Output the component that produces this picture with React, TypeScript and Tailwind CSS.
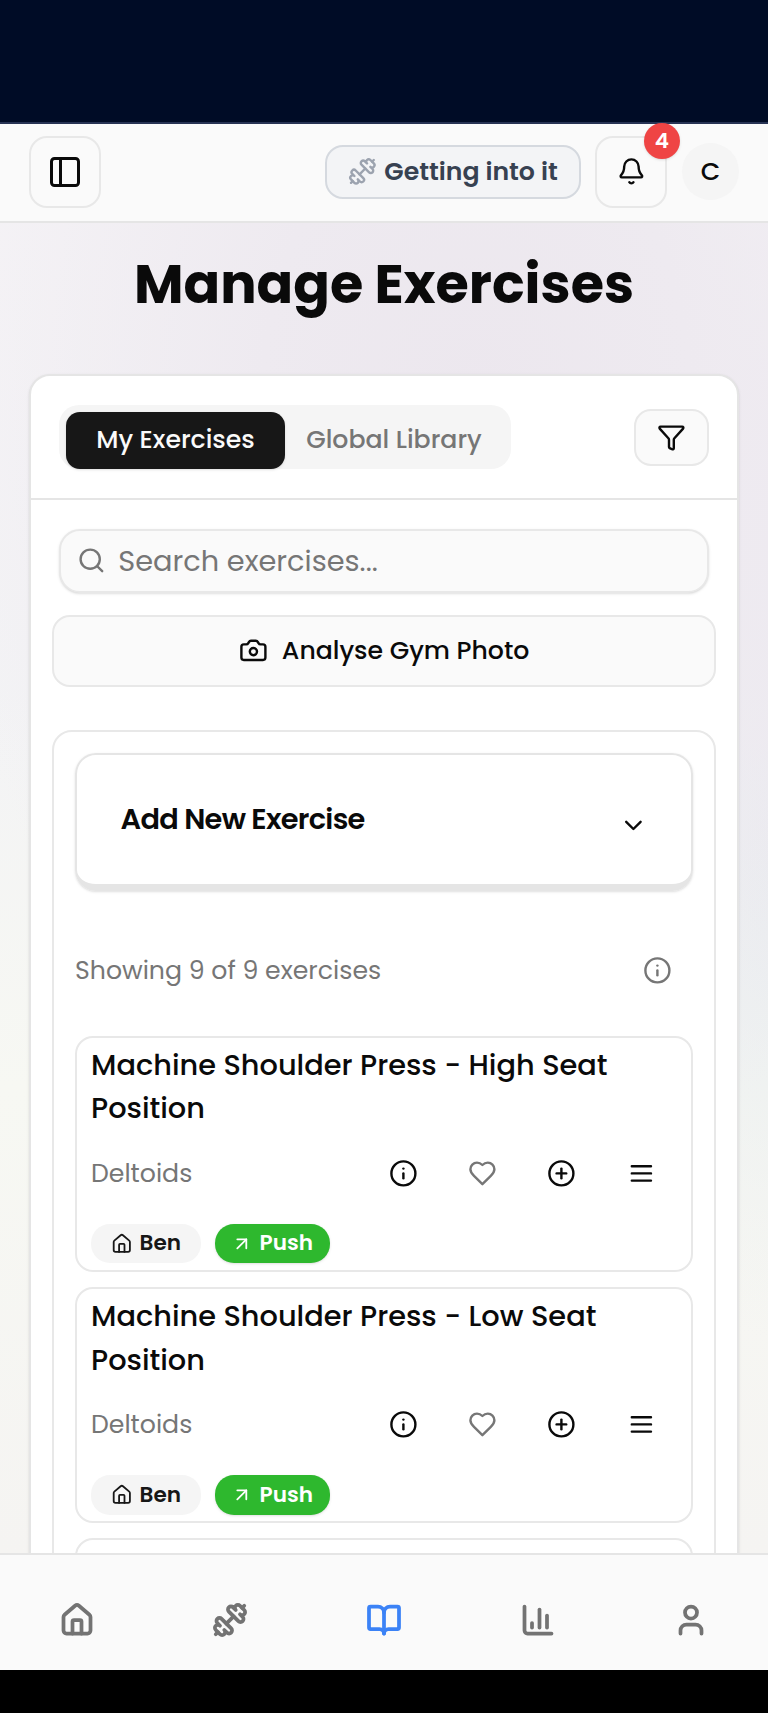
import { ReactNode } from "react";
import {
  ArrowUpRight,
  Bell,
  BookOpen,
  Camera,
  ChartColumn,
  ChevronDown,
  CirclePlus,
  Dumbbell,
  Funnel,
  House,
  Info,
  PanelLeft,
  Search,
  User,
} from "lucide-react";

function Heart() {
  return (
    <svg viewBox="0 0 24 24" fill="none" stroke="currentColor" strokeWidth="2" strokeLinecap="round" strokeLinejoin="round" className="size-[28.8px] text-[#767676]">
      <path d="M19 14c1.49-1.46 3-3.21 3-5.5A5.5 5.5 0 0 0 16.5 3c-1.76 0-3 .5-4.5 2-1.5-1.5-2.74-2-4.5-2A5.5 5.5 0 0 0 2 8.5c0 2.3 1.5 4.05 3 5.5l7 7Z" />
    </svg>
  );
}

function Menu() {
  return (
    <svg viewBox="0 0 24 24" fill="none" stroke="currentColor" strokeWidth="2" strokeLinecap="round" className="size-[28.8px]">
      <path d="M4 6h16M4 12h16M4 18h16" />
    </svg>
  );
}

function ActionButton({ children }: { children: ReactNode }) {
  return <button className="flex h-[58px] w-[79.2px] items-center justify-center">{children}</button>;
}

function ExerciseCard({ seat }: { seat: string }) {
  return (
    <article className="h-[236px] shrink-0 rounded-[18px] border-2 border-[#e8e8e8] bg-white pl-[14px] pt-[6.5px]">
      <h3 className="text-[28.8px] font-medium leading-[43.2px]">
        Machine Shoulder Press - {seat} Seat
        <br />
        Position
      </h3>
      <div className="mt-[14px] flex h-[58px] items-center justify-between pr-[10px]">
        <span className="text-[25.2px] text-[#767676]">Deltoids</span>
        <div className="flex">
          <ActionButton><Info className="size-[28.8px]" /></ActionButton>
          <ActionButton><Heart /></ActionButton>
          <ActionButton><CirclePlus className="size-[28.8px]" /></ActionButton>
          <ActionButton><Menu /></ActionButton>
        </div>
      </div>
      <div className="mt-[21.5px] flex gap-[14px] text-[21.6px] font-semibold">
        <span className="flex h-[39.5px] w-[110px] items-center rounded-[19px] bg-[#f5f5f5] pl-[20px] text-[#171717]">
          <House className="mr-[7px] size-[21.6px]" />
          Ben
        </span>
        <span className="flex h-[39.5px] w-[115px] items-center rounded-[19px] bg-[#2eb82e] pl-[16px] text-white shadow-sm">
          <ArrowUpRight className="mr-[7px] size-[21.6px]" />
          Push
        </span>
      </div>
    </article>
  );
}

export default function App() {
  return (
    <div className="flex h-[1713px] w-[768px] flex-col overflow-hidden bg-black font-['Poppins','Inter',sans-serif] text-[#0a0a0a]">
      <div className="h-[124px] shrink-0 border-b-2 border-[#273354] bg-[#000c26]" />
      <header className="flex h-[99px] shrink-0 items-center border-b-2 border-[#e5e5e5] bg-[#fafafa] px-[29px] pb-[2px]">
        <button className="flex size-[72px] items-center justify-center rounded-[18px] border-2 border-[#e8e8e8]">
          <PanelLeft className="size-[36px]" />
        </button>
        <div className="ml-auto flex h-[54px] w-[256px] items-center rounded-[18px] border-2 border-[#d5d9df] bg-[#f3f4f6] pl-[21px] text-[25.2px] font-semibold text-[#374151]">
          <Dumbbell className="mr-[7.5px] size-[28.8px] shrink-0 text-[#9ca3af]" />
          <span className="whitespace-nowrap">Getting into it</span>
        </div>
        <button className="relative ml-[14px] flex size-[72px] items-center justify-center rounded-[18px] border-2 border-[#e8e8e8]">
          <Bell className="size-[28.8px]" />
          <span className="absolute -right-[15px] -top-[15px] flex size-[36px] items-center justify-center rounded-full bg-[#ef4444] pt-px text-[21.6px] font-semibold text-white shadow-sm">4</span>
        </button>
        <div className="ml-[15px] flex size-[57px] items-center justify-center rounded-full bg-[#f5f5f5] text-[25.2px] font-medium">C</div>
      </header>

      <main className="flex h-[1330px] shrink-0 flex-col overflow-hidden bg-[#f6f6f4] bg-[radial-gradient(ellipse_70%_60%_at_62%_14%,#ece7ee_0%,#eeeaf0_40%,transparent_100%),radial-gradient(ellipse_20%_30%_at_100%_24%,#eeeaf1_0%,transparent_100%),radial-gradient(ellipse_30%_38%_at_102%_46%,#e8ecef_0%,transparent_100%),linear-gradient(180deg,#f5f3f6_0%,#f3f3f5_35%,#f7f8f3_65%,#f5f4f2_100%)] px-[29px]">
        <h1 className="mt-[27px] whitespace-nowrap text-center text-[54px] font-bold leading-[68px]">Manage Exercises</h1>
        <section className="mt-[56px] h-[1300px] shrink-0 rounded-t-[21px] border-[2px] border-[#e5e5e5] bg-white shadow-sm">
          <div className="flex h-[124px] items-start border-b-2 border-[#e5e5e5] px-[28px] pt-[28.5px]">
            <div className="flex h-[64.5px] w-[452px] items-end rounded-[20px] bg-[#f5f5f5] pl-[7px] text-[25.2px] font-medium">
              <button className="h-[57.5px] w-[219px] rounded-[14px] bg-[#171717] text-[#fafafa] shadow-sm">My Exercises</button>
              <button className="h-[57.5px] w-[218px] whitespace-nowrap text-[#767676]">Global Library</button>
            </div>
            <button className="ml-auto mt-[4px] flex h-[57.5px] w-[75px] items-center justify-center rounded-[17px] border-2 border-[#e8e8e8] bg-[#fafafa]">
              <Funnel className="size-[28.8px]" />
            </button>
          </div>
          <div className="px-[21px] pt-[28.5px]">
            <div className="mx-[7px] flex h-[64.5px] items-center rounded-[21px] border-2 border-[#e8e8e8] bg-[#fafafa] pl-[16px] text-[#767676] shadow-sm">
              <Search className="mr-[12.5px] size-[28.8px]" />
              <span className="pt-px text-[28.8px]">Search exercises...</span>
            </div>
            <button className="mt-[22px] flex h-[71.5px] w-full items-center justify-center rounded-[18px] border-2 border-[#e8e8e8] bg-[#fafafa] text-[25.2px] font-medium">
              <Camera className="mr-[14.4px] size-[28.8px]" />
              <span>Analyse Gym Photo</span>
            </button>
            <div className="mt-[43.5px] flex h-[1000px] flex-col rounded-t-[20px] border-2 border-[#e8e8e8] pl-[21px] pr-[21.5px] pt-[21px]">
              <button className="flex h-[138px] shrink-0 items-center justify-between rounded-[21px] border-2 border-b-[7px] border-[#e5e5e5] pl-[43.5px] pr-[43px] text-[28.8px] font-semibold tracking-tight shadow-sm">
                <span>Add New Exercise</span>
                <ChevronDown className="mt-[11px] size-[28.8px]" />
              </button>
              <div className="mt-[50.5px] flex h-[58px] shrink-0 items-center justify-between pr-[21px] text-[25.2px] text-[#767676]">
                <span>Showing 9 of 9 exercises</span>
                <Info className="size-[28.8px]" />
              </div>
              <div className="mt-[36px] flex flex-col gap-[15.3px]">
                <ExerciseCard seat="High" />
                <ExerciseCard seat="Low" />
                <article className="h-[236px] shrink-0 rounded-[18px] border-2 border-[#e8e8e8] bg-white" />
              </div>
            </div>
          </div>
        </section>
      </main>

      <nav className="grid h-[117px] shrink-0 grid-cols-5 items-center justify-items-center border-t-2 border-[#e5e5e5] bg-[#fafafa] pt-[14px] text-[#737373]">
        <House className="size-[36px]" strokeWidth={2.5} />
        <Dumbbell className="size-[36px]" strokeWidth={2.5} />
        <BookOpen className="size-[36px] text-[#3b82f6]" strokeWidth={2.5} />
        <ChartColumn className="size-[36px]" strokeWidth={2.5} />
        <User className="size-[36px]" strokeWidth={2.5} />
      </nav>
    </div>
  );
}
